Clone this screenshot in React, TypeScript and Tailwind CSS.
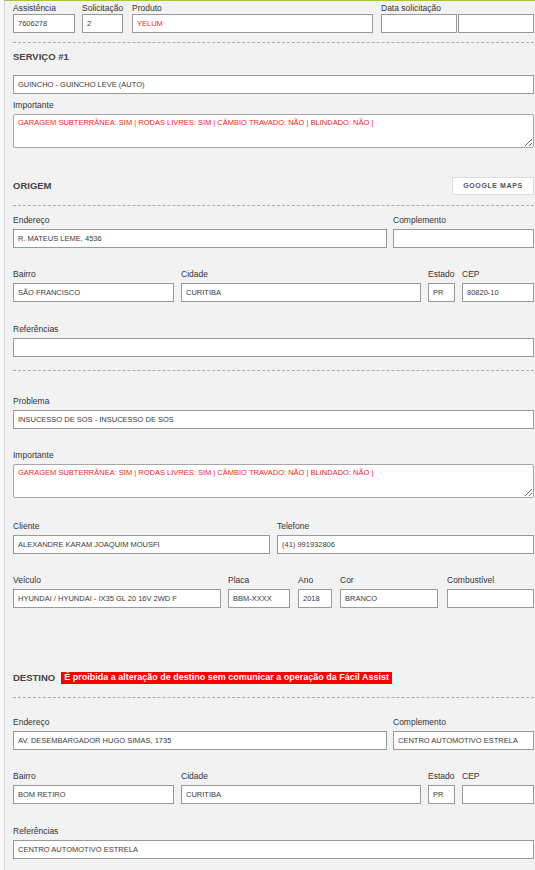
import React from "react";

const FONT = { fontFamily: '"Liberation Sans", Arial, sans-serif' };

function Label({ children, tight }: { children: React.ReactNode; tight?: boolean }) {
  return (
    <div className={`h-[12px] whitespace-nowrap text-[8.5px] leading-[12px] text-[#333] ${tight ? "" : "mb-[3px]"}`}>
      {children}
    </div>
  );
}

function Box({ value, red, className = "" }: { value?: string; red?: boolean; className?: string }) {
  return (
    <input
      readOnly
      value={value ?? ""}
      className={`block h-[19px] w-full min-w-0 border border-[#999] bg-white px-[4px] text-[7.5px] uppercase outline-none ${
        red ? "text-[#f22]" : "text-[#3a3a3a]"
      } ${className}`}
      style={FONT}
    />
  );
}

function Field({
  label,
  value,
  className = "",
  tight,
  red,
}: {
  label: string;
  value?: string;
  className?: string;
  tight?: boolean;
  red?: boolean;
}) {
  return (
    <div className={`min-w-0 shrink-0 ${className}`}>
      <Label tight={tight}>{label}</Label>
      <Box value={value} red={red} />
    </div>
  );
}

function Area({ value }: { value: string }) {
  return (
    <textarea
      readOnly
      value={value}
      className="block h-[34px] w-full rounded-[2px] border border-[#a6a6a6] bg-white px-[4px] py-[2px] text-[7.5px] leading-[11px] text-[#f22] outline-none"
      style={FONT}
    />
  );
}

function Dashed({ className = "" }: { className?: string }) {
  return <div className={`border-t border-dashed border-[#aaa] ${className}`} />;
}

function Heading({ children }: { children: React.ReactNode }) {
  return <div className="text-[9.5px] font-bold leading-[12px] text-[#444]">{children}</div>;
}

const IMPORTANTE =
  "GARAGEM SUBTERRÂNEA: SIM | RODAS LIVRES: SIM | CÂMBIO TRAVADO: NÃO | BLINDADO: NÃO |";

function AddressBlock({
  endereco,
  complemento,
  bairro,
  cidade,
  estado,
  cep,
  referencias,
  first,
}: {
  endereco: string;
  complemento: string;
  bairro: string;
  cidade: string;
  estado: string;
  cep: string;
  referencias: string;
  first: string;
}) {
  return (
    <>
      <div className={`flex ${first}`}>
        <Field label="Endereço" value={endereco} className="w-[374px]" />
        <Field label="Complemento" value={complemento} className="ml-[6px] flex-1" />
      </div>
      <div className="mt-[20px] flex">
        <Field label="Bairro" value={bairro} className="w-[161px]" />
        <Field label="Cidade" value={cidade} className="ml-[7px] w-[240px]" />
        <Field label="Estado" value={estado} className="ml-[7px] w-[27px]" />
        <Field label="CEP" value={cep} className="ml-[7px] flex-1" />
      </div>
      <Field label="Referências" value={referencias} className="mt-[21px]" />
    </>
  );
}

export default function App() {
  return (
    <div className="flex min-h-[870px] w-[535px] bg-[#f9f9f9]" style={FONT}>
      <div className="w-[4px] shrink-0" />
      <div className="flex-1 border-l border-t border-l-[#d4d4d4] border-t-[#a9c53d] bg-[#f2f2f2] pb-[12px] pl-[8px] pr-[1px] pt-[1px]">
        {/* cabeçalho */}
        <div className="flex">
          <Field label="Assistência" value="7606278" tight className="w-[62px]" />
          <Field label="Solicitação" value="2" tight className="ml-[7px] w-[41px]" />
          <Field label="Produto" value="YELUM" red tight className="ml-[9px] w-[241px]" />
          <div className="ml-[8px] min-w-0 flex-1">
            <Label tight>Data solicitação</Label>
            <div className="flex gap-[1px]">
              <Box />
              <Box />
            </div>
          </div>
        </div>

        <Dashed className="mt-[9px]" />

        {/* serviço */}
        <div className="mt-[8px]">
          <Heading>SERVIÇO #1</Heading>
        </div>
        <Box value="GUINCHO - GUINCHO LEVE (AUTO)" className="mt-[12px]" />
        <div className="mt-[5px]">
          <Label>Importante</Label>
          <Area value={IMPORTANTE} />
        </div>

        {/* origem */}
        <div className="mt-[29px] flex h-[18px] items-center justify-between">
          <Heading>ORIGEM</Heading>
          <button className="flex h-[18px] w-[82px] items-center justify-center border border-[#ddd] bg-white text-[7px] font-bold tracking-[0.6px] text-[#555]">
            GOOGLE MAPS
          </button>
        </div>
        <Dashed className="mt-[10px]" />
        <AddressBlock
          first="mt-[8px]"
          endereco="R. MATEUS LEME, 4536"
          complemento=""
          bairro="SÃO FRANCISCO"
          cidade="CURITIBA"
          estado="PR"
          cep="80820-10"
          referencias=""
        />

        <Dashed className="mt-[13px]" />

        {/* problema */}
        <Field label="Problema" value="INSUCESSO DE SOS - INSUCESSO DE SOS" className="mt-[24px]" />
        <div className="mt-[20px]">
          <Label>Importante</Label>
          <Area value={IMPORTANTE} />
        </div>

        <div className="mt-[22px] flex">
          <Field label="Cliente" value="ALEXANDRE KARAM JOAQUIM MOUSFI" className="w-[257px]" />
          <Field label="Telefone" value="(41) 991932806" className="ml-[7px] flex-1" />
        </div>

        <div className="mt-[20px] flex">
          <Field label="Veículo" value="HYUNDAI / HYUNDAI - IX35 GL 20 16V 2WD F" className="w-[208px]" />
          <Field label="Placa" value="BBM-XXXX" className="ml-[7px] w-[62px]" />
          <Field label="Ano" value="2018" className="ml-[8px] w-[34px]" />
          <Field label="Cor" value="BRANCO" className="ml-[8px] w-[98px]" />
          <Field label="Combustível" value="" className="ml-[9px] flex-1" />
        </div>

        {/* destino */}
        <div className="mt-[63px] flex h-[14px] items-center">
          <Heading>DESTINO</Heading>
          <span className="ml-[6px] flex h-[12px] items-center bg-[#ff0000] px-[3px] text-[9px] font-bold text-white">
            É proibida a alteração de destino sem comunicar a operação da Fácil Assist
          </span>
        </div>
        <Dashed className="mt-[12px]" />
        <AddressBlock
          first="mt-[18px]"
          endereco="AV. DESEMBARGADOR HUGO SIMAS, 1735"
          complemento="CENTRO AUTOMOTIVO ESTRELA"
          bairro="BOM RETIRO"
          cidade="CURITIBA"
          estado="PR"
          cep=""
          referencias="CENTRO AUTOMOTIVO ESTRELA"
        />
      </div>
    </div>
  );
}
